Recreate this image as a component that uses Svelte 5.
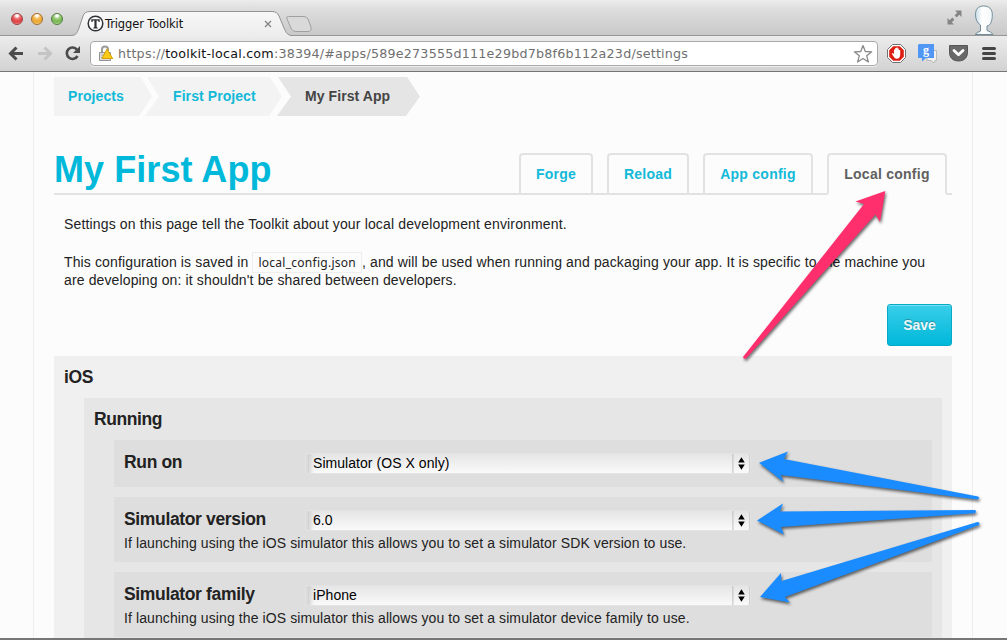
<script>
  const crumbs = [
    { label: 'Projects', kind: 'first' },
    { label: 'First Project', kind: 'mid' },
    { label: 'My First App', kind: 'current' }
  ];
  const tabs = [
    { label: 'Forge', width: 74, gap: 0 },
    { label: 'Reload', width: 82, gap: 14 },
    { label: 'App config', width: 110, gap: 14 },
    { label: 'Local config', width: 120, gap: 14, active: true }
  ];
  const fields = [
    { label: 'Run on', value: 'Simulator (OS X only)' },
    { label: 'Simulator version', value: '6.0', help: 'If launching using the iOS simulator this allows you to set a simulator SDK version to use.' },
    { label: 'Simulator family', value: 'iPhone', help: 'If launching using the iOS simulator this allows you to set a simulator device family to use.' }
  ];
</script>

<div class="window">
  <header class="titlebar">
    <div class="lights"><i class="red"></i><i class="amber"></i><i class="green"></i></div>
    <div class="tab-title">
      <svg class="tab-shape" width="240" height="26" viewBox="0 0 240 26">
        <defs><linearGradient id="tabg" x2="0" y2="1"><stop offset="0" stop-color="#f8f8f8" /><stop offset="1" stop-color="#ececec" /></linearGradient></defs>
        <path d="M0 24.5C5 24.5 6 22 8 17L12 5Q13.5 .5 19 .5H201Q206 .5 208 5L213 17C215 22 217 24.5 221 24.5V26H0Z" fill="url(#tabg)" />
        <path d="M0 24.5C5 24.5 6 22 8 17L12 5Q13.5 .5 19 .5H201Q206 .5 208 5L213 17C215 22 217 24.5 221 24.5" fill="none" stroke="#929292" />
        <path d="M217.500 5.500H233Q236 5.500 237.500 9L240 16Q241 20.500 237 20.500H225Q221 20.500 219.500 16L216 8Q215 5.500 217.500 5.500Z" fill="#d9d9d9" stroke="#a0a0a0" />
      </svg>
      <svg class="favicon" width="17" height="17" viewBox="0 0 17 17"><circle cx="8.500" cy="8.500" r="7.300" fill="#fff" stroke="#303236" stroke-width="1.500" /><path d="M4.300 4.200H12.700V7H11.700L11 5.500H9.600V12L10.700 12.800V13.400H6.300V12.800L7.400 12V5.500H6L5.300 7H4.300Z" fill="#303236" /></svg>
      <span>Trigger Toolkit</span>
      <svg class="close" width="8" height="8" viewBox="0 0 8 8"><path d="M1 1L7 7M7 1L1 7" stroke="#858585" stroke-width="1.400" /></svg>
    </div>
    <div class="corner">
      <svg width="15" height="15" viewBox="0 0 15 15"><path d="M8 .5H14.500V7L12.300 4.800L9.700 7.400L7.600 5.300L10.200 2.700ZM.5 8V14.500H7L4.800 12.300L7.400 9.700L5.300 7.600L2.700 10.200Z" fill="#858585" /></svg>
      <svg width="20" height="30" viewBox="0 0 20 30">
        <defs><linearGradient id="headg"><stop offset="0" stop-color="#c6dbe5" /><stop offset=".4" stop-color="#fff" /><stop offset="1" stop-color="#f2f8fa" /></linearGradient></defs>
        <path d="M1 29.500Q3 27 6.500 26V20C3 18 1.500 14 1.500 9.500C1.500 4 4.500 1 9.500 1C15 1 18.300 4 18.300 9.500C18.300 15 17 20.500 13 21V25.500Q17 26.500 19 29.500Z" fill="url(#headg)" stroke="#718b99" />
      </svg>
    </div>
  </header>

  <div class="toolbar">
    <svg width="80" height="36" viewBox="0 0 80 36">
      <path d="M23 17.500H11.500M16.500 11.500L10.500 17.500L16.500 23.500" fill="none" stroke="#4b4b4b" stroke-width="3" />
      <path d="M38 17.500H49.500M44.500 11.500L50.500 17.500L44.500 23.500" fill="none" stroke="#c4c4c4" stroke-width="3" />
      <path d="M77 13.700A5.700 5.700 0 1 0 77.500 20" fill="none" stroke="#4b4b4b" stroke-width="2.600" />
      <path d="M80 10V17H73Z" fill="#4b4b4b" />
    </svg>
    <div class="address">
      <svg width="16" height="17" viewBox="0 0 16 17">
        <path d="M4 8V4.500Q4 1.500 7 1.500Q10 1.500 10 4.500V7" fill="none" stroke="#9b9b9b" stroke-width="2" />
        <path d="M1.500 7.500H12.500V15.500H1.500Z" fill="#ddd" stroke="#929292" /><path d="M3 10H7M3 12.500H6" stroke="#aaa" />
        <path d="M9 4L14.700 13.500H4Z" fill="#f9cb16" stroke="#d8a000" stroke-linejoin="round" />
      </svg>
      <p class="url">https://<b>toolkit-local.com</b>:38394/#apps/589e273555d111e29bd7b8f6b112a23d/settings</p>
      <svg width="20" height="20" viewBox="0 0 20 20"><path d="M10 1.500L12.300 7.500L18.700 7.800L13.700 11.800L15.400 18L10 14.500L4.600 18L6.300 11.800L1.300 7.800L7.700 7.500Z" fill="#fff" stroke="#8a8a8a" stroke-width="1.300" stroke-linejoin="round" /></svg>
    </div>
    <svg class="ext" width="122" height="36" viewBox="0 0 122 36">
      <path d="M5.500 8.500H13.500L18.500 13.500V21.500L13.500 26.500H5.500L.5 21.500V13.500Z" fill="#fff" stroke="#717171" />
      <path d="M6.200 10.300H12.800L16.800 14.300V20.700L12.800 24.700H6.200L2.200 20.700V14.300Z" fill="#dc1f12" />
      <path d="M6.600 20.500L4.700 17.600L6 17L7 18.200V13.500H8.200V12H9.400V11.400H10.600V12.500H11.800V14H13.200V19Q12.800 22.800 10 22.800Q7.600 22.800 6.600 20.500Z" fill="#fff" />
      <path d="M40 14.500H49.500V24.500H48L47 27L44 24.500H40Z" fill="#f1f1f1" stroke="#bababa" />
      <path d="M32 8H47V22H39L35 25.500V22H31V9Z" fill="#4f96f5" />
      <text x="36" y="18" class="g">g</text>
      <path d="M62.500 9.500H80.500V16.500C80.500 21.500 77 25 71.500 25C66 25 62.500 21.500 62.500 16.500Z" fill="#696969" stroke="#555" />
      <path d="M67 14.500L71.500 18.700L76 14.500" fill="none" stroke="#fff" stroke-width="2.800" stroke-linecap="round" stroke-linejoin="round" />
      <path d="M96.500 12.500H107.500M96.500 17.500H107.500M96.500 22.500H107.500" stroke="#454545" stroke-width="3" stroke-linecap="round" />
    </svg>
  </div>

  <div class="viewport">
    <main>
      <nav class="crumbs">
        {#each crumbs as c}<a class={c.kind}>{c.label}</a>{/each}
      </nav>
      <div class="heading">
        <h1>My First App</h1>
        <div class="tabs">
          {#each tabs as t}
            <a class:active={t.active} style="width:{t.width}px;margin-left:{t.gap}px">{t.label}</a>
          {/each}
        </div>
      </div>
      <div class="copy">
        <p class="l1">Settings on this page tell the Toolkit about your local development environment.</p>
        <p class="l2">This configuration is saved in <code>local_config.json</code>, and will be used when running and packaging your app. It is specific to the machine you<br />are developing on: it shouldn't be shared between developers.</p>
      </div>
      <div class="actions"><button>Save</button></div>
      <section class="ios">
        <h2>iOS</h2>
        <section class="running">
          <h2>Running</h2>
          {#each fields as f}
            <div class="field">
              <div class="row">
                <h3>{f.label}</h3>
                <div class="select"><span>{f.value}</span>
                  <svg width="17" height="20" viewBox="0 0 17 20"><path d="M.5 0V20" stroke="#bcbcbc" /><path d="M6 9L9.500 3.500L13 9ZM6 11L9.500 16.500L13 11Z" fill="#000" /></svg>
                </div>
              </div>
              {#if f.help}<p>{f.help}</p>{/if}
            </div>
          {/each}
        </section>
      </section>
    </main>
  </div>

  <div class="contact">Contact us!</div>

  <svg class="arrows" width="1007" height="640" viewBox="0 0 1007 640">
    <path d="M885.300 191L855.500 201.500L864 204L743 357Q743.500 359.500 746 358.500L875.500 214.500L880 222Z" fill="#ff2f6d" />
    <g fill="#1a8cff">
      <path d="M759 462.800L788 451.500L784 459L978 496.500Q980.500 498 977.500 499.500L781 475L783.500 482Z" />
      <path d="M757 520.500L783 503.500L780 511.500L975 510Q977 511.500 975 513.200L781 527L784 534.500Z" />
      <path d="M760 597L781 573L781.500 581L977.500 522Q980.500 522.500 979 525L785 597L790 602.500Z" />
    </g>
  </svg>
</div>

<style>
  :global(body) { margin: 0; overflow: hidden; }
  * { box-sizing: border-box; }
  .window { position: relative; width: 1007px; height: 640px; overflow: hidden; display: flex; flex-direction: column; background: #fcfcfc; font: 14px/18px "Liberation Sans", Arial, sans-serif; color: #222; border-bottom: 2px solid #777; }
  svg { display: block; flex: none; }
  h1, h2, h3, p { margin: 0; }
  .titlebar { height: 36px; flex: none; display: flex; background: linear-gradient(#ececec, #dedede 25%, #c9c9c9); border-bottom: 1px solid #969696; }
  .lights { display: flex; gap: 8px; padding: 13px 0 0 11px; width: 71px; }
  .lights i { width: 12px; height: 12px; border-radius: 50%; border: 1px solid #777; }
  .lights .red { background: radial-gradient(circle at 50% 15%, #fff 0 10%, #ed6c6c 35%, #dd3e41 65%, #ffa9a5); border-color: #9d3c3e; }
  .lights .amber { background: radial-gradient(circle at 50% 15%, #fff 0 10%, #f6bb55 35%, #eba52e 65%, #ffe79b); border-color: #a46b2c; }
  .lights .green { background: radial-gradient(circle at 50% 15%, #fff 0 10%, #9acb75 35%, #76b552 65%, #cff2ac); border-color: #4d7c3c; }
  .tab-title { position: relative; display: flex; width: 240px; height: 25px; margin-top: 11px; padding: 4px 0 0 16px; color: #111; }
  .tab-title span { margin-left: 1px; position: relative; width: 161px; white-space: nowrap; font: 11.500px/18px "DejaVu Sans", sans-serif; letter-spacing: -.13px; }
  .tab-shape { position: absolute; left: 0; top: 0; overflow: visible; }
  .favicon, .close { position: relative; }
  .close { margin: 5px 0 0 -2px; }
  .corner { margin-left: auto; display: flex; gap: 12px; padding: 10px 13px 0 0; }
  .corner svg:last-child { margin-top: -5px; }
  .toolbar { height: 36px; flex: none; display: flex; background: linear-gradient(#ececec, #d2d2d2); border-bottom: 1px solid #747474; }
  .address { width: 788px; flex: none; height: 25px; margin: 5px 0 0 10px; border: 1px solid #a9a9a9; border-radius: 4px; background: #fff; display: flex; align-items: center; padding: 0 4px 0 7px; box-shadow: 0 1px #eee; }
  .url { flex: 1; margin-left: 4px; font: 12.700px/22px "DejaVu Sans", sans-serif; letter-spacing: .21px; color: #707070; white-space: nowrap; }
  .url b { font-weight: 400; color: #111; }
  .ext { margin-left: 9px; }
  .g { font: bold 12px "Liberation Serif", serif; fill: #fff; }
  .viewport { flex: 1; overflow: hidden; padding: 0 34px 0 33px; }
  main { width: 940px; height: 700px; padding: 5px 20px 0; border: solid #eee; border-width: 0 1px; }
  .crumbs { display: flex; height: 39px; font: bold 14px/39px "Liberation Sans", Arial, sans-serif; color: #12b9d8; letter-spacing: .08px; }
  .crumbs a { background: #f3f3f3; white-space: nowrap; }
  .crumbs .first { width: 98px; padding-left: 14px; clip-path: polygon(0 0, 87px 0, 98px 50%, 85px 100%, 0 100%); }
  .crumbs .mid { width: 137px; margin-left: -7px; padding-left: 28px; clip-path: polygon(2px 0, 125px 0, 137px 50%, 124px 100%, 0 100%, 14px 50%); }
  .crumbs .current { width: 143px; margin-left: -5px; padding-left: 28px; background: #e5e5e5; color: #444; clip-path: polygon(1px 0, 130px 0, 143px 50%, 129px 100%, 0 100%, 14px 50%); }
  .heading { height: 79px; border-bottom: 2px solid #e2e2e2; display: flex; justify-content: space-between; align-items: flex-end; }
  h1 { font-size: 36px; line-height: 46px; letter-spacing: .07px; color: #00b9da; }
  .tabs { display: flex; height: 42px; margin: 0 5px -2px 0; }
  .tabs a { height: 42px; border: 2px solid #e2e2e2; border-radius: 4px 4px 0 0; text-align: center; font-weight: bold; line-height: 38px; color: #12b9d8; letter-spacing: .25px; white-space: nowrap; }
  .tabs .active { color: #606060; background: #fcfcfc; border-bottom-color: #fcfcfc; }
  .copy { padding: 20px 0 0 10px; height: 109px; letter-spacing: .15px; }
  .copy p { white-space: nowrap; }
  .l2 { margin-top: 20px; letter-spacing: .13px; }
  code { font: 12px/17px "Noto Sans", sans-serif; border: 1px solid #eee; padding: 1px 5px; letter-spacing: .26px; }
  .actions { display: flex; justify-content: flex-end; height: 52px; }
  button { width: 65px; height: 42px; padding: 0; border: 1px solid #06a9c6; border-radius: 3px; background: linear-gradient(#39cee9, #00b8da); box-shadow: inset 0 1px #77e1f4; font: bold 14px "Liberation Sans", Arial, sans-serif; color: #edf7f9; text-shadow: 0 -1px 1px #278da0; }
  .ios { height: 400px; background: #f0f0f0; padding: 9px 10px 0; }
  h2 { font-size: 17.500px; line-height: 24px; letter-spacing: -.4px; }
  h3 { font-size: 17.500px; letter-spacing: -.35px; }
  .running { margin: 9px 0 0 20px; height: 350px; background: #e6e6e6; padding: 9px 10px 0; }
  .field { margin: 0 0 10px 20px; padding: 10px; background: #dedede; }
  .running h2 { margin-bottom: 9px; }
  .row { display: flex; height: 27px; }
  h3 { width: 182px; line-height: 24px; white-space: nowrap; }
  .select { width: 444px; height: 19px; margin-top: 4px; padding-left: 5px; display: flex; justify-content: space-between; background: linear-gradient(90deg, #d2d2d2, #d2d2d200 6px), linear-gradient(#e5e5e5, #fafafa); color: #000; border-left: 2px solid #dadada; border-right: 1px solid #cecece; border-radius: 2px; line-height: 19px; box-shadow: 0 0 0 1px #e3e3e3; letter-spacing: .05px; }
  .select svg { height: 19px; }
  .field p { line-height: 18px; white-space: nowrap; letter-spacing: .1px; }
  .contact { position: absolute; left: 747px; top: 561px; width: 185px; height: 67px; padding: 42px 0 0 6px; font: 14px/24px "Liberation Sans", Arial, sans-serif; color: #dfdfdf; }
  .arrows { position: absolute; inset: 0; filter: drop-shadow(1px 2px 1.500px #0009); }
</style>
